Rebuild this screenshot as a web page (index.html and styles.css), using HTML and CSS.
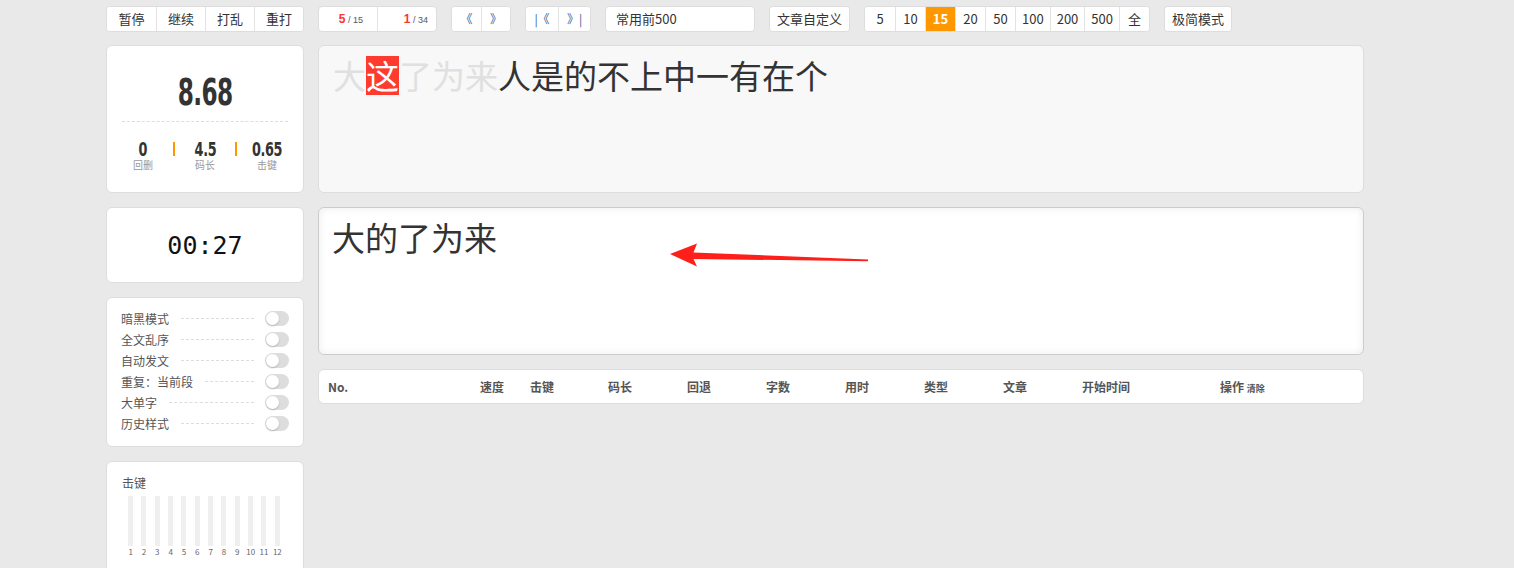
FILE: index.html
```html
<!DOCTYPE html>
<html lang="zh-CN">
<head>
  <meta charset="UTF-8" />
  <title>打字练习</title>
  <link rel="stylesheet" href="styles.css">
</head>
<body>
  <div class="page">
    <div class="toolbar">
      <div class="group ctrl">
        <button>暂停</button>
        <button>继续</button>
        <button>打乱</button>
        <button>重打</button>
      </div>
      <div class="group counter">
        <span class="cnt"><b>5</b> / 15</span>
        <span class="cnt wide"><b>1</b> / 34</span>
      </div>
      <div class="group">
        <button class="nav">《</button>
        <button class="nav">》</button>
      </div>
      <div class="group">
        <button class="nav edge">|《</button>
        <button class="nav edge">》|</button>
      </div>
      <div class="article">常用前500</div>
      <div class="group">
        <button class="tight">文章自定义</button>
      </div>
      <div class="group sizes">
        <button>5</button>
        <button>10</button>
        <button class="on">15</button>
        <button>20</button>
        <button>50</button>
        <button>100</button>
        <button>200</button>
        <button>500</button>
        <button>全</button>
      </div>
      <div class="group">
        <button class="tight">极简模式</button>
      </div>
    </div>

    <div class="main">
      <aside class="side">
        <div class="card speed">
          <div class="big"><span>8.68</span></div>
          <div class="stats">
            <div class="stat"><b>0</b><span>回删</span></div>
            <i class="sep"></i>
            <div class="stat"><b>4.5</b><span>码长</span></div>
            <i class="sep"></i>
            <div class="stat"><b>0.65</b><span>击键</span></div>
          </div>
        </div>

        <div class="card timer">00:27</div>

        <div class="card settings">
          <div class="opt"><span>暗黑模式</span><i class="dash"></i><i class="switch"></i></div>
          <div class="opt"><span>全文乱序</span><i class="dash"></i><i class="switch"></i></div>
          <div class="opt"><span>自动发文</span><i class="dash"></i><i class="switch"></i></div>
          <div class="opt"><span>重复：当前段</span><i class="dash"></i><i class="switch"></i></div>
          <div class="opt"><span>大单字</span><i class="dash"></i><i class="switch"></i></div>
          <div class="opt"><span>历史样式</span><i class="dash"></i><i class="switch"></i></div>
        </div>

        <div class="card chart">
          <div class="chart-title">击键</div>
          <div class="bars">
            <div class="col"><i></i><span>1</span></div>
            <div class="col"><i></i><span>2</span></div>
            <div class="col"><i></i><span>3</span></div>
            <div class="col"><i></i><span>4</span></div>
            <div class="col"><i></i><span>5</span></div>
            <div class="col"><i></i><span>6</span></div>
            <div class="col"><i></i><span>7</span></div>
            <div class="col"><i></i><span>8</span></div>
            <div class="col"><i></i><span>9</span></div>
            <div class="col"><i></i><span>10</span></div>
            <div class="col"><i></i><span>11</span></div>
            <div class="col"><i></i><span>12</span></div>
          </div>
        </div>
      </aside>

      <section class="content">
        <div class="card template"><span class="done">大</span><span class="cur">这</span><span class="done">了为来</span>人是的不上中一有在个</div>

        <div class="card typing">大的了为来</div>

        <div class="card history">
          <div class="thead">
            <span>No.</span>
            <span>速度</span>
            <span>击键</span>
            <span>码长</span>
            <span>回退</span>
            <span>字数</span>
            <span>用时</span>
            <span>类型</span>
            <span>文章</span>
            <span>开始时间</span>
            <span>操作 <small>清除</small></span>
          </div>
        </div>
      </section>
    </div>
  </div>

  <svg class="arrow" width="1514" height="568" viewBox="0 0 1514 568">
    <path d="M670 254 L697 243.5 L693.5 252.5 L868 259.6 L868 261.2 L693.5 259 L697 266.5 Z" fill="#ff1f1a"/>
  </svg>
</body>
</html>
```

FILE: styles.css
```css
body {
  margin: 0;
  background: #e9e9e9;
  color: #333;
  font-family: "Noto Sans CJK SC", "Noto Sans", sans-serif;
}
.page {
  padding: 6px 0 0 106px;
  width: 1258px;
}
.toolbar {
  display: flex;
  gap: 14px;
  height: 26px;
  margin-bottom: 13px;
}
.group {
  display: flex;
  background: #fff;
  border: 1px solid #ddd;
  border-radius: 4px;
  overflow: hidden;
  box-sizing: border-box;
}
.group button {
  font-family: inherit;
  font-size: 13px;
  color: #333;
  background: #fff;
  border: none;
  border-left: 1px solid #e3e3e3;
  padding: 0 6px;
  min-width: 30px;
  height: 24px;
  line-height: 24px;
  box-sizing: border-box;
  cursor: pointer;
}
.group button:first-child { border-left: none; }
.ctrl button {
  width: 49px;
  padding: 0;
}
.group .tight { padding: 0 7px; }
.group .nav {
  width: 29px;
  min-width: 0;
  padding: 0;
  color: #3a5f9a;
  font-size: 12px;
}
.group .edge { width: 32px; }
.counter .cnt {
  width: 58px;
  text-align: right;
  padding-right: 14px;
  box-sizing: border-box;
  font-family: "Liberation Sans", sans-serif;
  font-size: 9px;
  line-height: 24px;
  color: #555;
}
.counter .cnt.wide {
  width: 59px;
  padding-right: 8px;
  border-left: 1px solid #e3e3e3;
}
.counter b {
  color: #f33;
  font-size: 12px;
}
.article {
  width: 150px;
  height: 26px;
  box-sizing: border-box;
  background: #fff;
  border: 1px solid #ddd;
  border-radius: 4px;
  padding-left: 10px;
  font-size: 13px;
  line-height: 24px;
}
.sizes button.on {
  background: #ff9800;
  color: #fff;
  font-weight: bold;
}
.main {
  display: flex;
  gap: 14px;
  align-items: flex-start;
}
.side, .content {
  display: flex;
  flex-direction: column;
  gap: 14px;
}
.side { width: 198px; }
.content { width: 1046px; }
.card {
  background: #fff;
  border: 1px solid #ddd;
  border-radius: 6px;
  box-sizing: border-box;
}
.speed {
  height: 148px;
  padding: 24px 15px 0;
}
.big {
  text-align: center;
  font-family: "DejaVu Sans Condensed", "DejaVu Sans", sans-serif;
  font-weight: bold;
  font-size: 38px;
  line-height: 44px;
  color: #333;
  padding-bottom: 7px;
  border-bottom: 1px dashed #ddd;
}
.big span {
  display: inline-block;
  transform: scaleX(0.68);
  letter-spacing: -1px;
}
.stats {
  display: flex;
  justify-content: center;
  align-items: flex-start;
  margin: 18px -10px 0;
}
.stat {
  width: 60px;
  display: flex;
  flex-direction: column;
  align-items: center;
}
.stat b {
  font-family: "DejaVu Sans Condensed", "DejaVu Sans", sans-serif;
  font-size: 19px;
  line-height: 18px;
  color: #333;
  transform: scaleX(0.75);
  letter-spacing: -0.5px;
}
.stat span {
  font-size: 10px;
  line-height: 14px;
  color: #999;
}
.sep {
  width: 2px;
  height: 14px;
  margin-top: 2px;
  background: #ff9800;
}
.timer {
  height: 76px;
  display: flex;
  align-items: center;
  justify-content: center;
  font-family: "DejaVu Sans Mono", monospace;
  font-size: 25px;
  color: #111;
}
.settings {
  padding: 10px 14px 12px 14px;
}
.opt {
  display: flex;
  align-items: center;
  height: 21px;
  font-size: 12px;
  color: #555;
}
.dash {
  flex: 1;
  margin: 0 11px 0 12px;
  border-top: 1px dashed #ddd;
}
.switch {
  position: relative;
  width: 24px;
  height: 15px;
  border-radius: 8px;
  background: #ddd;
}
.switch::after {
  content: "";
  position: absolute;
  left: 1px;
  top: 1px;
  width: 13px;
  height: 13px;
  border-radius: 50%;
  background: #fff;
  box-shadow: 0 1px 2px rgba(0,0,0,0.2);
}
.chart {
  height: 130px;
  padding: 14px 15px 0;
}
.chart-title {
  font-size: 12px;
  line-height: 14px;
  color: #555;
}
.bars {
  display: grid;
  grid-template-columns: repeat(12, 1fr);
  width: 160px;
  margin: 6px 0 0 2px;
}
.col {
  display: flex;
  flex-direction: column;
  align-items: center;
}
.col i {
  width: 5px;
  height: 50px;
  background: #efefef;
}
.col span {
  font-size: 8px;
  line-height: 11px;
  color: #666;
}
.template {
  height: 148px;
  background: #f8f8f8;
  padding: 10px 14px;
  font-size: 33px;
  line-height: 39px;
  color: #333;
}
.template .done { color: #e0e0e0; }
.template .cur {
  display: inline-block;
  background: #ff3a2e;
  color: #fff;
}
.typing {
  height: 148px;
  border-color: #ccc;
  box-shadow: inset 0 0 8px rgba(0,0,0,0.08);
  padding: 9px 13px;
  font-size: 33px;
  line-height: 40px;
  color: #333;
}
.history { height: 35px; }
.thead {
  display: grid;
  grid-template-columns: 152px 50px 78px 79px 79px 79px 79px 79px 79px 138px 1fr;
  height: 33px;
  align-items: center;
  font-size: 12px;
  font-weight: bold;
  color: #555;
}
.thead span { padding-left: 9px; }
.thead small { font-size: 9px; }
.arrow {
  position: absolute;
  left: 0;
  top: 0;
  pointer-events: none;
}
```
